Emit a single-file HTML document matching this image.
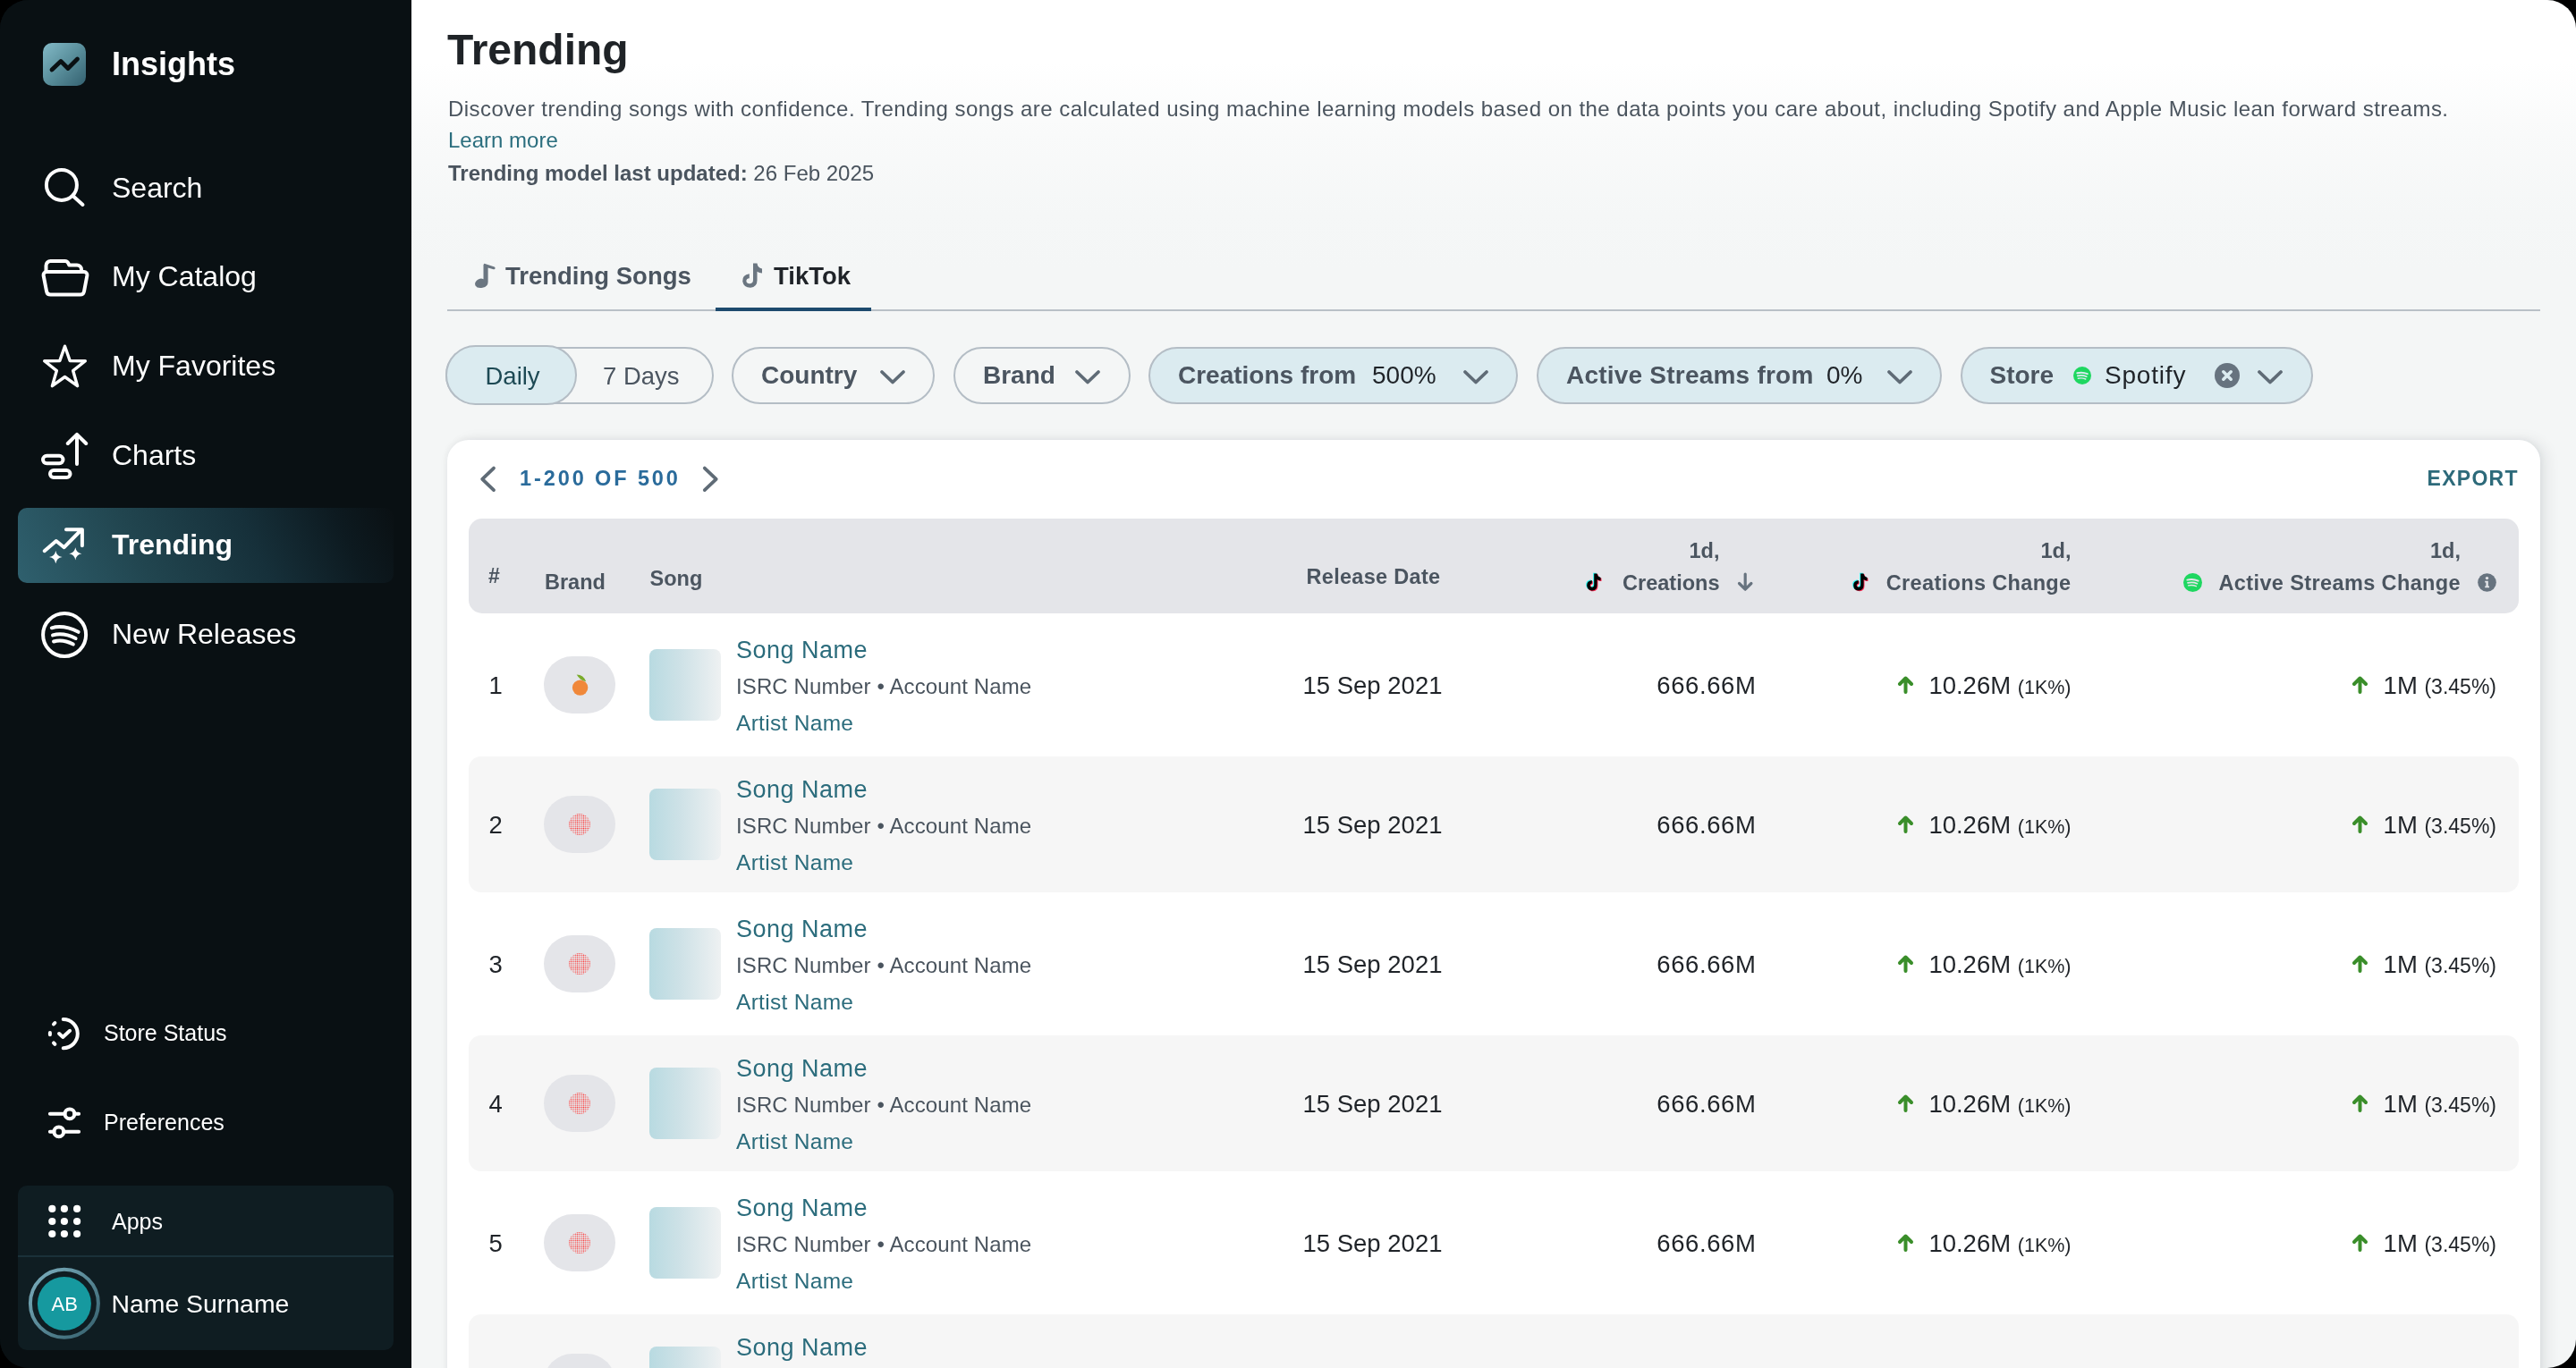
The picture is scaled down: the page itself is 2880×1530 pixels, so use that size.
<!DOCTYPE html>
<html><head><meta charset="utf-8">
<style>
*{margin:0;padding:0;box-sizing:border-box}
html,body{width:2880px;height:1530px;overflow:hidden;background:#000;font-family:"Liberation Sans",sans-serif}
#screen{position:absolute;left:0;top:0;width:2880px;height:1530px;border-radius:32px;overflow:hidden;background:#091013;will-change:transform}
#main{position:absolute;left:460px;top:0;width:2420px;height:1530px;background:linear-gradient(180deg,#ffffff 0px,#ffffff 70px,#f9fafa 150px,#f5f7f7 240px,#f4f6f6 300px,#f4f6f6 100%)}
#side{position:absolute;left:0;top:0;width:460px;height:1530px;background:#091013}
.t{position:absolute;white-space:nowrap;line-height:1}
.w{color:#fff}
svg{position:absolute;overflow:visible}
.ic{fill:none;stroke:#fff;stroke-width:4;stroke-linecap:round;stroke-linejoin:round}
.nav{font-size:32px}
.pill{position:absolute;border:2px solid #b4bdc5;border-radius:40px;background:#f4f6f6}
.pill.on{background:#dbebf0}
.pt{top:406.4px;font-size:28px;font-weight:700;color:#4b5560}
.th{font-size:23.5px;font-weight:700;color:#4b5560}
.rv{font-size:27.5px;color:#1f2328}
.up path{fill:none;stroke:#3a8e2a;stroke-width:4;stroke-linecap:round;stroke-linejoin:round}
.chev polyline{fill:none;stroke:#5f6b76;stroke-width:3.8;stroke-linecap:round;stroke-linejoin:round}
</style></head><body>
<div id="screen">

<div id="main"></div>
<!-- header -->
<div class="t" style="left:500px;top:31.5px;font-size:48px;font-weight:700;color:#1f2327">Trending</div>
<div class="t" style="left:501px;top:109.5px;font-size:24px;letter-spacing:0.47px;color:#4a545e">Discover trending songs with confidence. Trending songs are calculated using machine learning models based on the data points you care about, including Spotify and Apple Music lean forward streams.</div>
<div class="t" style="left:501px;top:145px;font-size:24px;color:#2b6e7e">Learn more</div>
<div class="t" style="left:501px;top:181.5px;font-size:24px;color:#4a545e"><b>Trending model last updated:</b> 26 Feb 2025</div>

<!-- tabs -->
<div style="position:absolute;left:500px;top:346px;width:2340px;height:2px;background:#b9c0c7"></div>
<div style="position:absolute;left:800px;top:344px;width:174px;height:4px;background:#1d4a6e"></div>
<svg style="left:520px;top:290px" width="40" height="40"><path fill="#6b7681" d="M20.5 25.5 V6 L21.5 4.8 L32.8 8.5 Q34 9 33.5 10.5 Q33 11.6 31.8 11.2 L25.6 9.5 V25.5 Q25.6 30.5 19.5 31.8 Q13.5 32.8 11.5 29.5 Q10 26 13.5 23.2 Q17 20.6 20.5 22.2 Z"/></svg>
<div class="t" style="left:565px;top:294.5px;font-size:27.5px;font-weight:700;color:#4b5560">Trending Songs</div>
<svg style="left:820px;top:290px" width="40" height="40"><path fill="#6b7681" d="M22 4.5 H26.5 Q27 9.5 32 10.5 V15.5 Q28.8 15.5 26.5 13.8 V23.5 Q26.5 31 19 31.8 Q11.5 31.8 10.2 24.8 Q9.6 17.5 17.8 16.3 V21.3 Q14.2 21.6 14.4 24.6 Q15 27.5 18.5 27.2 Q22 26.8 22 23 Z"/></svg>
<div class="t" style="left:865px;top:294.5px;font-size:27.5px;font-weight:700;color:#1f2328">TikTok</div>

<!-- filters -->
<div class="pill" style="left:498px;top:388px;width:300px;height:64px"></div>
<div class="pill on" style="left:498px;top:386px;width:147px;height:67px"></div>
<div class="t" style="left:542.5px;top:406.8px;font-size:27.5px;color:#1d4954">Daily</div>
<div class="t" style="left:674px;top:406.8px;font-size:27.5px;color:#4b5560">7 Days</div>

<div class="pill" style="left:818px;top:388px;width:227px;height:64px"></div>
<div class="t pt" style="left:851px">Country</div>
<svg class="chev" style="left:984px;top:414px" width="28" height="15"><polyline points="2,2 14,13.5 26,2"/></svg>

<div class="pill" style="left:1066px;top:388px;width:198px;height:64px"></div>
<div class="t pt" style="left:1099px">Brand</div>
<svg class="chev" style="left:1202px;top:414px" width="28" height="15"><polyline points="2,2 14,13.5 26,2"/></svg>

<div class="pill on" style="left:1284px;top:388px;width:413px;height:64px"></div>
<div class="t pt" style="left:1317px">Creations from</div>
<div class="t pt" style="left:1534px;font-weight:400;color:#1f2328">500%</div>
<svg class="chev" style="left:1636px;top:414px" width="28" height="15"><polyline points="2,2 14,13.5 26,2"/></svg>

<div class="pill on" style="left:1718px;top:388px;width:453px;height:64px"></div>
<div class="t pt" style="left:1751px;letter-spacing:0.22px">Active Streams from</div>
<div class="t pt" style="left:2042px;font-weight:400;color:#1f2328">0%</div>
<svg class="chev" style="left:2110px;top:414px" width="28" height="15"><polyline points="2,2 14,13.5 26,2"/></svg>

<div class="pill on" style="left:2192px;top:388px;width:394px;height:64px"></div>
<div class="t pt" style="left:2224.5px">Store</div>
<svg style="left:2318px;top:410px" width="20" height="20"><circle cx="10" cy="10" r="10" fill="#1ed760"/><g fill="none" stroke="#dbebf0" stroke-linecap="round"><path d="M4.3 7.3 Q10 5.6 15.8 8.2" stroke-width="2"/><path d="M4.8 10.4 Q10 9 14.8 11.2" stroke-width="1.7"/><path d="M5.3 13.2 Q9.8 12.2 13.8 14" stroke-width="1.4"/></g></svg>
<div class="t pt" style="left:2353px;font-weight:400;letter-spacing:0.8px;color:#1f2328">Spotify</div>
<svg style="left:2476px;top:406px" width="28" height="28"><circle cx="14" cy="14" r="14" fill="#67737f"/><path d="M9.8 9.8 L18.2 18.2 M18.2 9.8 L9.8 18.2" stroke="#dbebf0" stroke-width="3.6" stroke-linecap="round"/></svg>
<svg class="chev" style="left:2524px;top:414px" width="28" height="15"><polyline points="2,2 14,13.5 26,2"/></svg>

<!-- card -->
<div style="position:absolute;left:500px;top:492px;width:2340px;height:1200px;border-radius:24px;background:#fff;box-shadow:0 0 8px rgba(20,30,40,0.07),8px 0 16px rgba(20,30,40,0.07)"></div>
<svg class="chev" style="left:535px;top:520px" width="22" height="32"><polyline points="17,3.6 4.2,15.9 17,28.1"/></svg>
<div class="t" style="left:581px;top:524.1px;font-size:23.5px;font-weight:700;letter-spacing:2.9px;color:#2a6b9b">1-200 OF 500</div>
<svg class="chev" style="left:783px;top:520px" width="22" height="32"><polyline points="4.8,3.6 17.7,15.9 4.8,28.1"/></svg>
<div class="t" style="left:2713.5px;top:524.2px;font-size:23px;font-weight:700;letter-spacing:1.3px;color:#2d6a7a">EXPORT</div>

<!-- table header -->
<div style="position:absolute;left:524px;top:580px;width:2292px;height:105.6px;border-radius:15px;background:#e4e5e9"></div>
<div class="t th" style="left:546px;top:632.5px;font-size:23px">#</div>
<div class="t th" style="left:609px;top:640.2px">Brand</div>
<div class="t th" style="left:726.5px;top:635.8px">Song</div>
<div class="t th" style="left:1460.5px;top:633.5px;letter-spacing:0.3px">Release Date</div>
<div class="t th" style="right:957.5px;top:605.3px">1d,</div>
<div class="t th" style="right:957.5px;top:641px">Creations</div>
<svg style="left:1771px;top:640px" width="22" height="22"><g transform="translate(1,0.5)"><path d="M10.2 1 H13.6 Q14 4.6 17.6 5.4 V8.8 Q15.3 8.8 13.6 7.6 V14 Q13.6 19.6 8.2 20 Q2.8 20 2.2 14.8 Q1.8 9.4 7.8 8.6 V12 Q5.5 12.2 5.6 14.3 Q6 16.4 8.4 16.2 Q10.2 15.9 10.2 13.8 Z" fill="#25f4ee" transform="translate(-1,-0.8)"/><path d="M10.2 1 H13.6 Q14 4.6 17.6 5.4 V8.8 Q15.3 8.8 13.6 7.6 V14 Q13.6 19.6 8.2 20 Q2.8 20 2.2 14.8 Q1.8 9.4 7.8 8.6 V12 Q5.5 12.2 5.6 14.3 Q6 16.4 8.4 16.2 Q10.2 15.9 10.2 13.8 Z" fill="#fe2c55" transform="translate(0.9,0.8)"/><path d="M10.2 1 H13.6 Q14 4.6 17.6 5.4 V8.8 Q15.3 8.8 13.6 7.6 V14 Q13.6 19.6 8.2 20 Q2.8 20 2.2 14.8 Q1.8 9.4 7.8 8.6 V12 Q5.5 12.2 5.6 14.3 Q6 16.4 8.4 16.2 Q10.2 15.9 10.2 13.8 Z" fill="#000"/></g></svg>
<svg style="left:1942px;top:640px" width="20" height="22"><path d="M9.2 2 V19 M2.5 12.5 L9.2 19.2 L15.9 12.5" fill="none" stroke="#67737f" stroke-width="3.2" stroke-linecap="round" stroke-linejoin="round"/></svg>

<div class="t th" style="right:564.5px;top:605.3px">1d,</div>
<div class="t th" style="right:564.5px;top:641px;letter-spacing:0.35px">Creations Change</div>
<svg style="left:2069px;top:640px" width="22" height="22"><g transform="translate(1,0.5)"><path d="M10.2 1 H13.6 Q14 4.6 17.6 5.4 V8.8 Q15.3 8.8 13.6 7.6 V14 Q13.6 19.6 8.2 20 Q2.8 20 2.2 14.8 Q1.8 9.4 7.8 8.6 V12 Q5.5 12.2 5.6 14.3 Q6 16.4 8.4 16.2 Q10.2 15.9 10.2 13.8 Z" fill="#25f4ee" transform="translate(-1,-0.8)"/><path d="M10.2 1 H13.6 Q14 4.6 17.6 5.4 V8.8 Q15.3 8.8 13.6 7.6 V14 Q13.6 19.6 8.2 20 Q2.8 20 2.2 14.8 Q1.8 9.4 7.8 8.6 V12 Q5.5 12.2 5.6 14.3 Q6 16.4 8.4 16.2 Q10.2 15.9 10.2 13.8 Z" fill="#fe2c55" transform="translate(0.9,0.8)"/><path d="M10.2 1 H13.6 Q14 4.6 17.6 5.4 V8.8 Q15.3 8.8 13.6 7.6 V14 Q13.6 19.6 8.2 20 Q2.8 20 2.2 14.8 Q1.8 9.4 7.8 8.6 V12 Q5.5 12.2 5.6 14.3 Q6 16.4 8.4 16.2 Q10.2 15.9 10.2 13.8 Z" fill="#000"/></g></svg>

<div class="t th" style="right:129px;top:605.3px">1d,</div>
<div class="t th" style="right:129px;top:641px;letter-spacing:0.38px">Active Streams Change</div>
<svg style="left:2441px;top:640.5px" width="21" height="21"><circle cx="10.5" cy="10.5" r="10.5" fill="#1ed760"/><g fill="none" stroke="#e4e5e9" stroke-linecap="round"><path d="M4.4 7.6 Q10.5 5.8 16.6 8.6" stroke-width="2"/><path d="M5 10.9 Q10.5 9.4 15.5 11.7" stroke-width="1.7"/><path d="M5.6 13.9 Q10.3 12.8 14.4 14.7" stroke-width="1.4"/></g></svg>
<svg style="left:2769.5px;top:640.5px" width="21" height="21"><circle cx="10.5" cy="10.5" r="10.3" fill="#67737f"/><circle cx="10.5" cy="5.6" r="1.7" fill="#e4e5e9"/><path d="M8.2 8.8 H11.8 V14.6 H13 V16.2 H8.2 V14.6 H9.4 V10.4 H8.2 Z" fill="#e4e5e9"/></svg>

<svg width="0" height="0" style="position:absolute"><defs><pattern id="halftone" width="2.3" height="2.3" patternUnits="userSpaceOnUse"><rect width="2.3" height="2.3" fill="#e4e5e9"/><rect width="0.7" height="2.3" fill="#f29a9a"/><rect width="2.3" height="0.7" fill="#f29a9a"/><rect width="0.7" height="0.7" fill="#ff2020"/></pattern></defs></svg>

<div class="t rv" style="left:546.5px;top:752.7px">1</div>
<div style="position:absolute;left:608px;top:734.2px;width:80px;height:64px;border-radius:32px;background:#e4e5e9"></div>
<svg style="left:630px;top:748.2px" width="36" height="36"><circle cx="18.6" cy="21.1" r="8.7" fill="#f0883a"/><path d="M14.7 6.5 Q22.5 6.8 25.2 14.2 Q18.5 13.2 14.7 6.5 Z" fill="#7aab2b"/></svg>
<div style="position:absolute;left:726px;top:726.2px;width:80px;height:80px;border-radius:8px;background:linear-gradient(90deg,#b8dae1 0%,#cfe2e7 45%,#eef1f2 100%)"></div>
<div class="t" style="left:823px;top:713.8px;font-size:27px;letter-spacing:0.5px;color:#2b6c7c">Song Name</div>
<div class="t" style="left:823px;top:756.0px;font-size:24px;letter-spacing:0.12px;color:#4a545e">ISRC Number • Account Name</div>
<div class="t" style="left:823px;top:796.6px;font-size:24.5px;letter-spacing:0.3px;color:#2b6c7c">Artist Name</div>
<div class="t rv" style="left:1456.5px;top:752.7px;width:153.5px;text-align:right">15 Sep 2021</div>
<div class="t rv" style="right:916.5px;top:752.7px;letter-spacing:0.6px">666.66M</div>
<svg class="up" style="left:2121.5px;top:755.7px" width="17" height="20"><path d="M8.5 18 V2.5 M2 9 L8.5 2.5 L15 9"/></svg>
<div class="t rv" style="right:564.5px;top:752.7px">10.26M <span style="font-size:21.5px">(1K%)</span></div>
<svg class="up" style="left:2629.5px;top:755.7px" width="17" height="20"><path d="M8.5 18 V2.5 M2 9 L8.5 2.5 L15 9"/></svg>
<div class="t rv" style="right:89px;top:752.7px">1M <span style="font-size:23px">(3.45%)</span></div>
<div style="position:absolute;left:524px;top:846.4px;width:2292px;height:151.6px;border-radius:14px;background:#f6f6f6"></div>
<div class="t rv" style="left:546.5px;top:908.7px">2</div>
<div style="position:absolute;left:608px;top:890.2px;width:80px;height:64px;border-radius:32px;background:#e4e5e9"></div>
<svg style="left:636px;top:909.9px" width="24" height="24"><circle cx="12" cy="12" r="12" fill="url(#halftone)"/></svg>
<div style="position:absolute;left:726px;top:882.2px;width:80px;height:80px;border-radius:8px;background:linear-gradient(90deg,#b8dae1 0%,#cfe2e7 45%,#eef1f2 100%)"></div>
<div class="t" style="left:823px;top:869.8px;font-size:27px;letter-spacing:0.5px;color:#2b6c7c">Song Name</div>
<div class="t" style="left:823px;top:912.0px;font-size:24px;letter-spacing:0.12px;color:#4a545e">ISRC Number • Account Name</div>
<div class="t" style="left:823px;top:952.6px;font-size:24.5px;letter-spacing:0.3px;color:#2b6c7c">Artist Name</div>
<div class="t rv" style="left:1456.5px;top:908.7px;width:153.5px;text-align:right">15 Sep 2021</div>
<div class="t rv" style="right:916.5px;top:908.7px;letter-spacing:0.6px">666.66M</div>
<svg class="up" style="left:2121.5px;top:911.7px" width="17" height="20"><path d="M8.5 18 V2.5 M2 9 L8.5 2.5 L15 9"/></svg>
<div class="t rv" style="right:564.5px;top:908.7px">10.26M <span style="font-size:21.5px">(1K%)</span></div>
<svg class="up" style="left:2629.5px;top:911.7px" width="17" height="20"><path d="M8.5 18 V2.5 M2 9 L8.5 2.5 L15 9"/></svg>
<div class="t rv" style="right:89px;top:908.7px">1M <span style="font-size:23px">(3.45%)</span></div>

<div class="t rv" style="left:546.5px;top:1064.7px">3</div>
<div style="position:absolute;left:608px;top:1046.2px;width:80px;height:64px;border-radius:32px;background:#e4e5e9"></div>
<svg style="left:636px;top:1065.9px" width="24" height="24"><circle cx="12" cy="12" r="12" fill="url(#halftone)"/></svg>
<div style="position:absolute;left:726px;top:1038.2px;width:80px;height:80px;border-radius:8px;background:linear-gradient(90deg,#b8dae1 0%,#cfe2e7 45%,#eef1f2 100%)"></div>
<div class="t" style="left:823px;top:1025.8px;font-size:27px;letter-spacing:0.5px;color:#2b6c7c">Song Name</div>
<div class="t" style="left:823px;top:1068.0px;font-size:24px;letter-spacing:0.12px;color:#4a545e">ISRC Number • Account Name</div>
<div class="t" style="left:823px;top:1108.6px;font-size:24.5px;letter-spacing:0.3px;color:#2b6c7c">Artist Name</div>
<div class="t rv" style="left:1456.5px;top:1064.7px;width:153.5px;text-align:right">15 Sep 2021</div>
<div class="t rv" style="right:916.5px;top:1064.7px;letter-spacing:0.6px">666.66M</div>
<svg class="up" style="left:2121.5px;top:1067.7px" width="17" height="20"><path d="M8.5 18 V2.5 M2 9 L8.5 2.5 L15 9"/></svg>
<div class="t rv" style="right:564.5px;top:1064.7px">10.26M <span style="font-size:21.5px">(1K%)</span></div>
<svg class="up" style="left:2629.5px;top:1067.7px" width="17" height="20"><path d="M8.5 18 V2.5 M2 9 L8.5 2.5 L15 9"/></svg>
<div class="t rv" style="right:89px;top:1064.7px">1M <span style="font-size:23px">(3.45%)</span></div>
<div style="position:absolute;left:524px;top:1158.4px;width:2292px;height:151.6px;border-radius:14px;background:#f6f6f6"></div>
<div class="t rv" style="left:546.5px;top:1220.7px">4</div>
<div style="position:absolute;left:608px;top:1202.2px;width:80px;height:64px;border-radius:32px;background:#e4e5e9"></div>
<svg style="left:636px;top:1221.9px" width="24" height="24"><circle cx="12" cy="12" r="12" fill="url(#halftone)"/></svg>
<div style="position:absolute;left:726px;top:1194.2px;width:80px;height:80px;border-radius:8px;background:linear-gradient(90deg,#b8dae1 0%,#cfe2e7 45%,#eef1f2 100%)"></div>
<div class="t" style="left:823px;top:1181.8px;font-size:27px;letter-spacing:0.5px;color:#2b6c7c">Song Name</div>
<div class="t" style="left:823px;top:1224.0px;font-size:24px;letter-spacing:0.12px;color:#4a545e">ISRC Number • Account Name</div>
<div class="t" style="left:823px;top:1264.6px;font-size:24.5px;letter-spacing:0.3px;color:#2b6c7c">Artist Name</div>
<div class="t rv" style="left:1456.5px;top:1220.7px;width:153.5px;text-align:right">15 Sep 2021</div>
<div class="t rv" style="right:916.5px;top:1220.7px;letter-spacing:0.6px">666.66M</div>
<svg class="up" style="left:2121.5px;top:1223.7px" width="17" height="20"><path d="M8.5 18 V2.5 M2 9 L8.5 2.5 L15 9"/></svg>
<div class="t rv" style="right:564.5px;top:1220.7px">10.26M <span style="font-size:21.5px">(1K%)</span></div>
<svg class="up" style="left:2629.5px;top:1223.7px" width="17" height="20"><path d="M8.5 18 V2.5 M2 9 L8.5 2.5 L15 9"/></svg>
<div class="t rv" style="right:89px;top:1220.7px">1M <span style="font-size:23px">(3.45%)</span></div>

<div class="t rv" style="left:546.5px;top:1376.7px">5</div>
<div style="position:absolute;left:608px;top:1358.2px;width:80px;height:64px;border-radius:32px;background:#e4e5e9"></div>
<svg style="left:636px;top:1377.9px" width="24" height="24"><circle cx="12" cy="12" r="12" fill="url(#halftone)"/></svg>
<div style="position:absolute;left:726px;top:1350.2px;width:80px;height:80px;border-radius:8px;background:linear-gradient(90deg,#b8dae1 0%,#cfe2e7 45%,#eef1f2 100%)"></div>
<div class="t" style="left:823px;top:1337.8px;font-size:27px;letter-spacing:0.5px;color:#2b6c7c">Song Name</div>
<div class="t" style="left:823px;top:1380.0px;font-size:24px;letter-spacing:0.12px;color:#4a545e">ISRC Number • Account Name</div>
<div class="t" style="left:823px;top:1420.6px;font-size:24.5px;letter-spacing:0.3px;color:#2b6c7c">Artist Name</div>
<div class="t rv" style="left:1456.5px;top:1376.7px;width:153.5px;text-align:right">15 Sep 2021</div>
<div class="t rv" style="right:916.5px;top:1376.7px;letter-spacing:0.6px">666.66M</div>
<svg class="up" style="left:2121.5px;top:1379.7px" width="17" height="20"><path d="M8.5 18 V2.5 M2 9 L8.5 2.5 L15 9"/></svg>
<div class="t rv" style="right:564.5px;top:1376.7px">10.26M <span style="font-size:21.5px">(1K%)</span></div>
<svg class="up" style="left:2629.5px;top:1379.7px" width="17" height="20"><path d="M8.5 18 V2.5 M2 9 L8.5 2.5 L15 9"/></svg>
<div class="t rv" style="right:89px;top:1376.7px">1M <span style="font-size:23px">(3.45%)</span></div>
<div style="position:absolute;left:524px;top:1470.4px;width:2292px;height:151.6px;border-radius:14px;background:#f6f6f6"></div>
<div class="t rv" style="left:546.5px;top:1532.7px">6</div>
<div style="position:absolute;left:608px;top:1514.2px;width:80px;height:64px;border-radius:32px;background:#e4e5e9"></div>
<svg style="left:636px;top:1533.9px" width="24" height="24"><circle cx="12" cy="12" r="12" fill="url(#halftone)"/></svg>
<div style="position:absolute;left:726px;top:1506.2px;width:80px;height:80px;border-radius:8px;background:linear-gradient(90deg,#b8dae1 0%,#cfe2e7 45%,#eef1f2 100%)"></div>
<div class="t" style="left:823px;top:1493.8px;font-size:27px;letter-spacing:0.5px;color:#2b6c7c">Song Name</div>
<div class="t" style="left:823px;top:1536.0px;font-size:24px;letter-spacing:0.12px;color:#4a545e">ISRC Number • Account Name</div>
<div class="t" style="left:823px;top:1576.6px;font-size:24.5px;letter-spacing:0.3px;color:#2b6c7c">Artist Name</div>
<div class="t rv" style="left:1456.5px;top:1532.7px;width:153.5px;text-align:right">15 Sep 2021</div>
<div class="t rv" style="right:916.5px;top:1532.7px;letter-spacing:0.6px">666.66M</div>
<svg class="up" style="left:2121.5px;top:1535.7px" width="17" height="20"><path d="M8.5 18 V2.5 M2 9 L8.5 2.5 L15 9"/></svg>
<div class="t rv" style="right:564.5px;top:1532.7px">10.26M <span style="font-size:21.5px">(1K%)</span></div>
<svg class="up" style="left:2629.5px;top:1535.7px" width="17" height="20"><path d="M8.5 18 V2.5 M2 9 L8.5 2.5 L15 9"/></svg>
<div class="t rv" style="right:89px;top:1532.7px">1M <span style="font-size:23px">(3.45%)</span></div>

<div id="side">
  <!-- logo -->
  <div style="position:absolute;left:48px;top:48px;width:48px;height:48px;border-radius:10px;background:linear-gradient(135deg,#83bac7 0%,#5a8f9c 50%,#346170 100%)"></div>
  <svg style="left:48px;top:48px" width="48" height="48"><polyline points="10,30 20,20.5 28,28.5 38.5,18" fill="none" stroke="#0a1013" stroke-width="4.8" stroke-linecap="round" stroke-linejoin="round"/></svg>
  <div class="t w" style="left:125px;top:54px;font-size:36px;font-weight:700">Insights</div>

  <!-- Search -->
  <svg style="left:40px;top:180px" width="70" height="70"><circle class="ic" cx="28.9" cy="26.9" r="17"/><line class="ic" x1="42" y1="39.5" x2="52.5" y2="49"/></svg>
  <div class="t w nav" style="left:125px;top:194px">Search</div>

  <!-- My Catalog -->
  <svg style="left:40px;top:280px" width="70" height="70"><path class="ic" d="M11.5 23 V17 a5 5 0 0 1 5 -5 H32.5 c2 0 3.3 1 4 2.6 l0.8 1.8 H46 a5 5 0 0 1 5 5 V23"/><path class="ic" d="M12 24 H54 a3.5 3.5 0 0 1 3.4 4 L54 46 a4.5 4.5 0 0 1 -4.4 3.6 H16.5 a4.5 4.5 0 0 1 -4.4 -3.6 L8.6 28 a3.5 3.5 0 0 1 3.4 -4 Z"/></svg>
  <div class="t w nav" style="left:125px;top:293px">My Catalog</div>

  <!-- My Favorites -->
  <svg style="left:40px;top:375px" width="70" height="70"><path class="ic" style="stroke-width:3.4" d="M32.50 12.20 L38.14 28.43 L55.33 28.78 L41.63 39.60 L46.61 56.70 L32.50 46.50 L18.39 56.70 L23.37 39.60 L9.67 28.78 L26.86 28.43 Z"/></svg>
  <div class="t w nav" style="left:125px;top:393px">My Favorites</div>

  <!-- Charts -->
  <svg style="left:40px;top:475px" width="70" height="70"><path class="ic" d="M46 44 V11 M35.8 21 L46 10.8 L56.2 21"/><rect class="ic" x="8" y="34.8" width="22.5" height="8.5" rx="4.25"/><rect class="ic" x="16" y="51" width="22.5" height="8" rx="4"/></svg>
  <div class="t w nav" style="left:125px;top:493px">Charts</div>

  <!-- Trending (active) -->
  <div style="position:absolute;left:20px;top:568px;width:420px;height:84px;border-radius:10px;background:linear-gradient(65deg,#2f606e 0%,#21454f 33%,#16303a 62%,#0d1a20 85%,#0a1013 100%)"></div>
  <svg style="left:40px;top:575px" width="70" height="70"><path class="ic" d="M9.7 41.2 L22.8 30 L31.7 37.2 L50 18.5 M34 17.2 H51.9 V35.3"/>
    <path fill="#fff" d="M22.3 41 Q23.3 47 29.6 48.1 Q23.3 49.2 22.3 55.3 Q21.3 49.2 15 48.1 Q21.3 47 22.3 41 Z"/>
    <path fill="#fff" d="M44.3 37.2 Q45.3 43.2 51.4 44.3 Q45.3 45.4 44.3 51.4 Q43.3 45.4 37.2 44.3 Q43.3 43.2 44.3 37.2 Z"/></svg>
  <div class="t w nav" style="left:125px;top:593.3px;font-weight:700">Trending</div>

  <!-- New Releases -->
  <svg style="left:40px;top:675px" width="70" height="70"><circle class="ic" cx="32.1" cy="35" r="24"/>
    <path class="ic" stroke-width="5" d="M17.8 27.3 Q31 23.5 47.6 31.8"/>
    <path class="ic" stroke-width="4.5" d="M19 35.4 Q31 32 44.6 39"/>
    <path class="ic" stroke-width="4" d="M20 42.5 Q30 39.5 41.8 45.5"/></svg>
  <div class="t w nav" style="left:125px;top:693px">New Releases</div>

  <!-- Store Status -->
  <svg style="left:40px;top:1120px" width="70" height="70"><path class="ic" stroke-width="4.2" d="M30.7 20 A16.1 16.1 0 0 1 30.7 52.2"/>
    <path class="ic" d="M20 25.5 L21.4 24 M15.9 35 V37.2 M20 46.4 L21.4 47.9 M26.1 36 L30.2 39.9 L38.1 32.8"/></svg>
  <div class="t w" style="left:116px;top:1143px;font-size:25px">Store Status</div>

  <!-- Preferences -->
  <svg style="left:40px;top:1220px" width="70" height="70"><path class="ic" d="M15.9 25.8 H32.5 M43.3 25.8 H48.1 M15.9 45.8 H20.4 M31.2 45.8 H48.1"/><circle class="ic" cx="37.9" cy="25.8" r="5.4"/><circle class="ic" cx="25.8" cy="45.8" r="5.4"/></svg>
  <div class="t w" style="left:116px;top:1243px;font-size:25px">Preferences</div>

  <!-- Apps/user box -->
  <div style="position:absolute;left:20px;top:1326px;width:420px;height:184px;border-radius:10px;background:#0f1d22"></div>
  <div style="position:absolute;left:20px;top:1403.5px;width:420px;height:2px;background:#1a3139"></div>
  <svg style="left:20px;top:1320px" width="140" height="80">
    <g fill="#fff"><circle cx="38.3" cy="31.9" r="4.1"/><circle cx="51.9" cy="31.9" r="4.1"/><circle cx="66.1" cy="31.9" r="4.1"/>
    <circle cx="38.3" cy="46" r="4.1"/><circle cx="51.9" cy="46" r="4.1"/><circle cx="66.1" cy="46" r="4.1"/>
    <circle cx="38.3" cy="60" r="4.1"/><circle cx="51.9" cy="60" r="4.1"/><circle cx="66.1" cy="60" r="4.1"/></g></svg>
  <div class="t w" style="left:125px;top:1354px;font-size:25px">Apps</div>
  <svg style="left:0px;top:1400px" width="140" height="120"><defs><linearGradient id="rg" x1="0" y1="0" x2="1" y2="1"><stop offset="0" stop-color="#7db0bf"/><stop offset="1" stop-color="#345f6c"/></linearGradient></defs>
    <circle cx="71.9" cy="57.8" r="38" fill="none" stroke="url(#rg)" stroke-width="4"/><circle cx="71.9" cy="58" r="30" fill="#16999f"/></svg>
  <div class="t w" style="left:57.5px;top:1447.5px;font-size:22px">AB</div>
  <div class="t w" style="left:124.5px;top:1443.8px;font-size:28.4px">Name Surname</div>
</div>
</div>
</body></html>
